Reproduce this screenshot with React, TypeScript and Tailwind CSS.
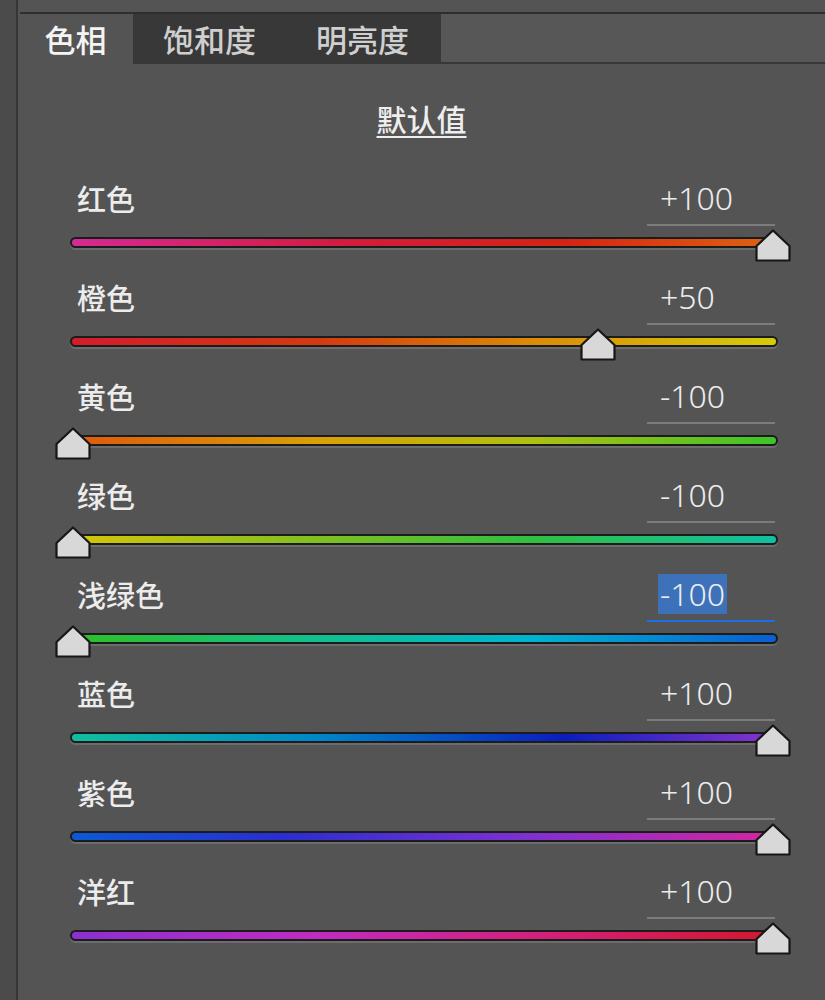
import { useState } from "react";

type Band = {
  name: string;
  value: number;
  gradient: string;
};

const bands: Band[] = [
  { name: "红色", value: 100, gradient: "bg-[linear-gradient(90deg,#d42a94,#d21c3c_40%,#d42414_70%,#de6410)]" },
  { name: "橙色", value: 50, gradient: "bg-[linear-gradient(90deg,#d41c2c,#d43a10_35%,#dc8a06_65%,#d4cc0a)]" },
  { name: "黄色", value: -100, gradient: "bg-[linear-gradient(90deg,#de5a0c,#daa006_35%,#b0c010_65%,#3cc42a)]" },
  { name: "绿色", value: -100, gradient: "bg-[linear-gradient(90deg,#d8c40a,#80c020_35%,#30c040_65%,#10c0a4)]" },
  { name: "浅绿色", value: -100, gradient: "bg-[linear-gradient(90deg,#30c024,#10c090_35%,#00b4d0_65%,#0a5ed4)]" },
  { name: "蓝色", value: 100, gradient: "bg-[linear-gradient(90deg,#10c0a0,#0086c8_35%,#0a1ebe_70%,#8a34cc)]" },
  { name: "紫色", value: 100, gradient: "bg-[linear-gradient(90deg,#0a5ad4,#2a2ed0_30%,#8030d0_65%,#d426a0)]" },
  { name: "洋红", value: 100, gradient: "bg-[linear-gradient(90deg,#8c30d0,#c02cc0_35%,#d42080_65%,#d4182c)]" },
];

const tabs = ["色相", "饱和度", "明亮度"];

function fmt(v: number) {
  return v > 0 ? `+${v}` : `${v}`;
}

function Thumb({ value }: { value: number }) {
  // thumb centre travels 700px along the track
  const left = -15 + ((value + 100) / 200) * 700;
  return (
    <svg
      className="absolute top-[-8px]"
      style={{ left }}
      width="36"
      height="33"
      viewBox="0 0 36 33"
    >
      <polygon
        points="1.5,17 18,1.5 34.5,17 34.5,31.5 1.5,31.5"
        fill="#d8d8d8"
        stroke="#161616"
        strokeWidth="2.2"
        strokeLinejoin="round"
      />
    </svg>
  );
}

function SliderRow({ band, selected }: { band: Band; selected: boolean }) {
  return (
    <div className="h-[99px] flex flex-col">
      <div className="flex items-start">
        <div className="pl-[59px] pt-[10px] text-[29px] leading-[40px] font-medium text-[#ececec] w-[629px]">
          {band.name}
        </div>
        <div
          className={
            "w-[128px] h-[58px] pt-[10px] pl-[11px] border-b-2 " +
            (selected ? "border-[#1c6fe6]" : "border-[#7c7c7c]")
          }
        >
          <span
            className={
              "inline-block font-['Noto_Sans','Liberation_Sans',sans-serif] font-light text-[32px] leading-[40px] text-[#ececec] px-[2px] " +
              (selected ? "bg-[#3d72bb]" : "")
            }
          >
            {fmt(band.value)}
          </span>
        </div>
      </div>
      <div className="relative ml-[52px] mt-[11px] w-[708px] h-[11px] rounded-full bg-[#1c1c1c] shadow-[0_2px_0_#6c6c6c] p-[2px]">
        <div className={"h-full rounded-full " + band.gradient} />
        <Thumb value={band.value} />
      </div>
    </div>
  );
}

export default function App() {
  const [activeTab, setActiveTab] = useState(0);

  return (
    <div className="w-[825px] h-[1000px] bg-[#545454] flex overflow-hidden font-['Noto_Sans_CJK_SC','Noto_Sans',sans-serif]">
      <div className="w-[16px] bg-[#4b4b4b]" />
      <div className="w-[2px] bg-[#363636]" />
      <div className="flex-1 flex flex-col">
        <div className="h-[12px] ml-[2px]" />
        <div className="h-[2px] ml-[2px] bg-[#2e2e2e]" />
        <div className="h-[50px] flex ml-[2px]">
          {tabs.map((t, i) => (
            <button
              key={t}
              onClick={() => setActiveTab(i)}
              className={
                "h-full text-[31px] leading-[50px] font-medium " +
                (i === 0 ? "w-[113px] pr-[2px] " : "w-[153px] ") +
                (i === activeTab ? "bg-[#545454] text-[#f4f4f4]" : "bg-[#383838] text-[#cfcfcf]")
              }
            >
              {t}
            </button>
          ))}
          <div className="flex-1 bg-[#575757] border-l-2 border-b-2 border-[#383838]" />
        </div>

        <div className="pt-[34px] h-[104px] text-center">
          <span className="text-[30px] leading-[40px] font-medium text-[#eeeeee] underline underline-offset-[5px] decoration-2">
            默认值
          </span>
        </div>

        {bands.map((b) => (
          <SliderRow key={b.name} band={b} selected={b.name === "浅绿色"} />
        ))}
      </div>
    </div>
  );
}
